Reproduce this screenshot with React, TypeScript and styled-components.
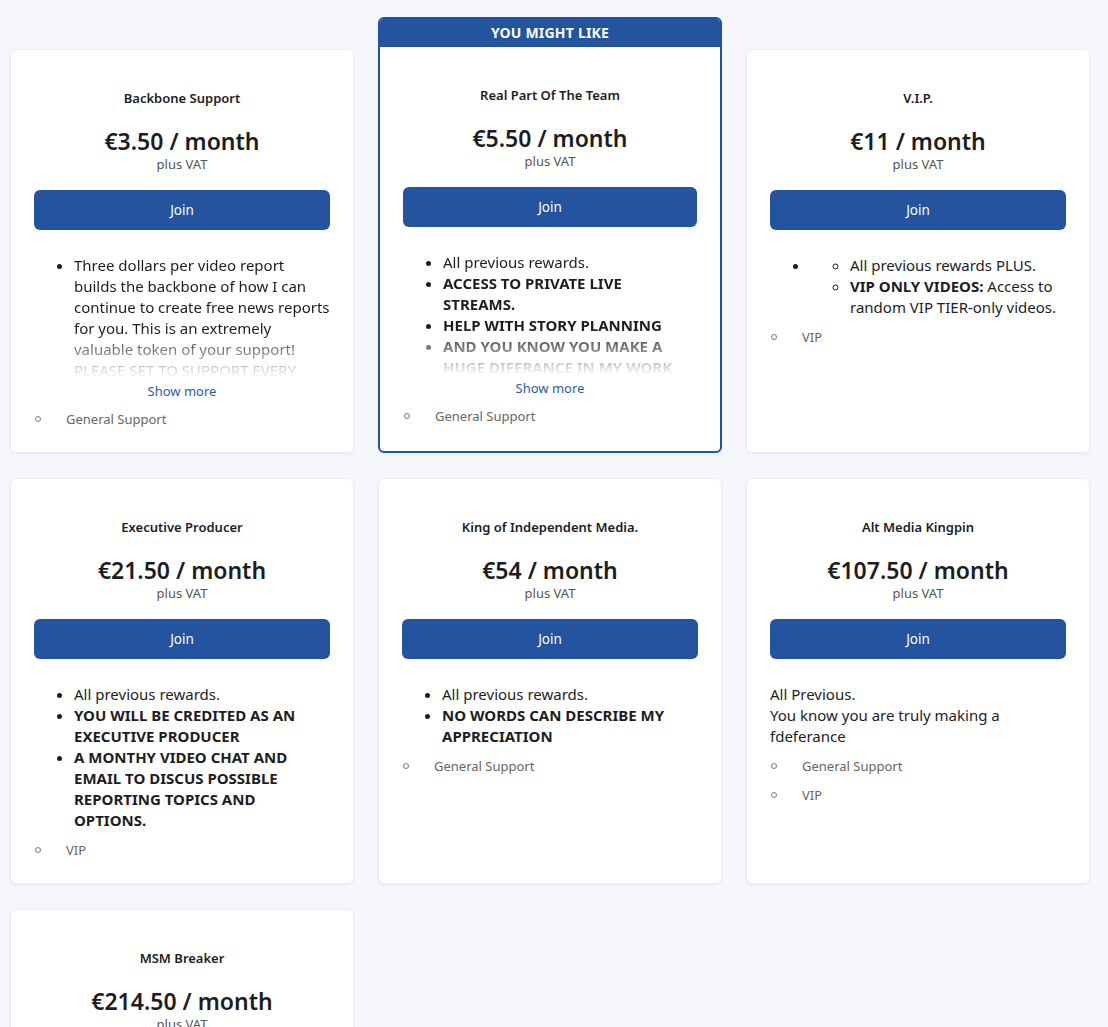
import styled, { createGlobalStyle } from 'styled-components';

const GlobalStyle = createGlobalStyle`
  html, body {
    margin: 0;
    padding: 0;
    background: #f6f7fb;
  }
  body {
    font-family: 'Noto Sans', 'Open Sans', sans-serif;
    color: #1d1d1f;
  }
`;

const Grid = styled.div`
  display: grid;
  grid-template-columns: repeat(3, 344px);
  column-gap: 24px;
  row-gap: 25px;
  padding: 49px 18px 40px 10px;
`;

const Card = styled.div<{ $featured?: boolean }>`
  display: flex;
  flex-direction: column;
  background: #fff;
  border-radius: 6px;
  border: ${(p) => (p.$featured ? '2px solid #24549e' : '1px solid #ebecf1')};
  box-shadow: 0 1px 3px rgba(20, 30, 60, 0.06);
  margin-top: ${(p) => (p.$featured ? '-32px' : '0')};
  overflow: hidden;
`;

const Ribbon = styled.div`
  background: #24549e;
  color: #fff;
  font-size: 14px;
  font-weight: 700;
  line-height: 28px;
  text-align: center;
  letter-spacing: 0.2px;
  margin: -2px -2px 0;
  padding-top: 2px;
`;

const Body = styled.div`
  display: flex;
  flex-direction: column;
  padding: 39px 23px 24px;
`;

const Title = styled.div`
  font-size: 13px;
  font-weight: 600;
  line-height: 18px;
  text-align: center;
`;

const Price = styled.div`
  margin-top: 19px;
  font-size: 23px;
  font-weight: 600;
  line-height: 30px;
  text-align: center;
`;

const Vat = styled.div`
  font-size: 13px;
  line-height: 16px;
  color: #555;
  text-align: center;
`;

const JoinButton = styled.button`
  margin-top: 18px;
  height: 40px;
  width: 100%;
  border: none;
  border-radius: 6px;
  background: #24549e;
  color: #fff;
  font-family: inherit;
  font-size: 13.5px;
  cursor: pointer;
`;

const Description = styled.div<{ $clipped?: boolean }>`
  margin-top: 25px;
  font-size: 15px;
  line-height: 21px;
  ${(p) =>
    p.$clipped &&
    `
    max-height: 123px;
    overflow: hidden;
    -webkit-mask-image: linear-gradient(to bottom, #000 62%, transparent 100%);
    mask-image: linear-gradient(to bottom, #000 62%, transparent 100%);
  `}

  p {
    margin: 0;
  }
  ul {
    margin: 0;
    padding-left: 40px;
  }
  ul ul {
    list-style: circle;
  }
`;

const ShowMore = styled.div`
  margin-top: 4px;
  font-size: 13px;
  line-height: 18px;
  color: #2b5cab;
  text-align: center;
  cursor: pointer;
`;

const PerkList = styled.ul`
  list-style: none;
  margin: 10px 0 0;
  padding: 0;
`;

const Perk = styled.li`
  display: flex;
  align-items: center;
  gap: 25px;
  font-size: 13px;
  line-height: 18px;
  color: #666;
  padding-left: 1px;

  & + & {
    margin-top: 11px;
  }

  &::before {
    content: '';
    width: 4px;
    height: 4px;
    border: 1px solid #777;
    border-radius: 50%;
    flex-shrink: 0;
  }
`;

type Tier = {
  name: string;
  price: string;
  featured?: boolean;
  clipped?: boolean;
  description: React.ReactNode;
  perks: string[];
};

const tiers: Tier[] = [
  {
    name: 'Backbone Support',
    price: '€3.50',
    clipped: true,
    description: (
      <ul>
        <li>
          Three dollars per video report builds the backbone of how I can continue to create
          free news reports for you. This is an extremely valuable token of your support!
          PLEASE SET TO SUPPORT EVERY VIDEO
        </li>
      </ul>
    ),
    perks: ['General Support'],
  },
  {
    name: 'Real Part Of The Team',
    price: '€5.50',
    featured: true,
    clipped: true,
    description: (
      <ul>
        <li>All previous rewards.</li>
        <li>
          <strong>ACCESS TO PRIVATE LIVE STREAMS.</strong>
        </li>
        <li>
          <strong>HELP WITH STORY PLANNING</strong>
        </li>
        <li>
          <strong>AND YOU KNOW YOU MAKE A HUGE DIFERANCE IN MY WORK</strong>
        </li>
      </ul>
    ),
    perks: ['General Support'],
  },
  {
    name: 'V.I.P.',
    price: '€11',
    description: (
      <ul>
        <li>
          <ul>
            <li>All previous rewards PLUS.</li>
            <li>
              <strong>VIP ONLY VIDEOS:</strong> Access to random VIP TIER-only videos.
            </li>
          </ul>
        </li>
      </ul>
    ),
    perks: ['VIP'],
  },
  {
    name: 'Executive Producer',
    price: '€21.50',
    description: (
      <ul>
        <li>All previous rewards.</li>
        <li>
          <strong>YOU WILL BE CREDITED AS AN EXECUTIVE PRODUCER</strong>
        </li>
        <li>
          <strong>A MONTHY VIDEO CHAT AND EMAIL TO DISCUS POSSIBLE REPORTING TOPICS AND OPTIONS.</strong>
        </li>
      </ul>
    ),
    perks: ['VIP'],
  },
  {
    name: 'King of Independent Media.',
    price: '€54',
    description: (
      <ul>
        <li>All previous rewards.</li>
        <li>
          <strong>NO WORDS CAN DESCRIBE MY APPRECIATION</strong>
        </li>
      </ul>
    ),
    perks: ['General Support'],
  },
  {
    name: 'Alt Media Kingpin',
    price: '€107.50',
    description: (
      <>
        <p>All Previous.</p>
        <p>You know you are truly making a fdeferance</p>
      </>
    ),
    perks: ['General Support', 'VIP'],
  },
  {
    name: 'MSM Breaker',
    price: '€214.50',
    description: (
      <ul>
        <li>All previous rewards.</li>
      </ul>
    ),
    perks: ['VIP'],
  },
];

const TierCard = ({ tier }: { tier: Tier }) => (
  <Card $featured={tier.featured}>
    {tier.featured && <Ribbon>YOU MIGHT LIKE</Ribbon>}
    <Body>
      <Title>{tier.name}</Title>
      <Price>{tier.price} / month</Price>
      <Vat>plus VAT</Vat>
      <JoinButton>Join</JoinButton>
      <Description $clipped={tier.clipped}>{tier.description}</Description>
      {tier.clipped && <ShowMore>Show more</ShowMore>}
      <PerkList>
        {tier.perks.map((perk) => (
          <Perk key={perk}>{perk}</Perk>
        ))}
      </PerkList>
    </Body>
  </Card>
);

const App = () => (
  <>
    <GlobalStyle />
    <Grid>
      {tiers.map((tier) => (
        <TierCard key={tier.name} tier={tier} />
      ))}
    </Grid>
  </>
);

export default App;
